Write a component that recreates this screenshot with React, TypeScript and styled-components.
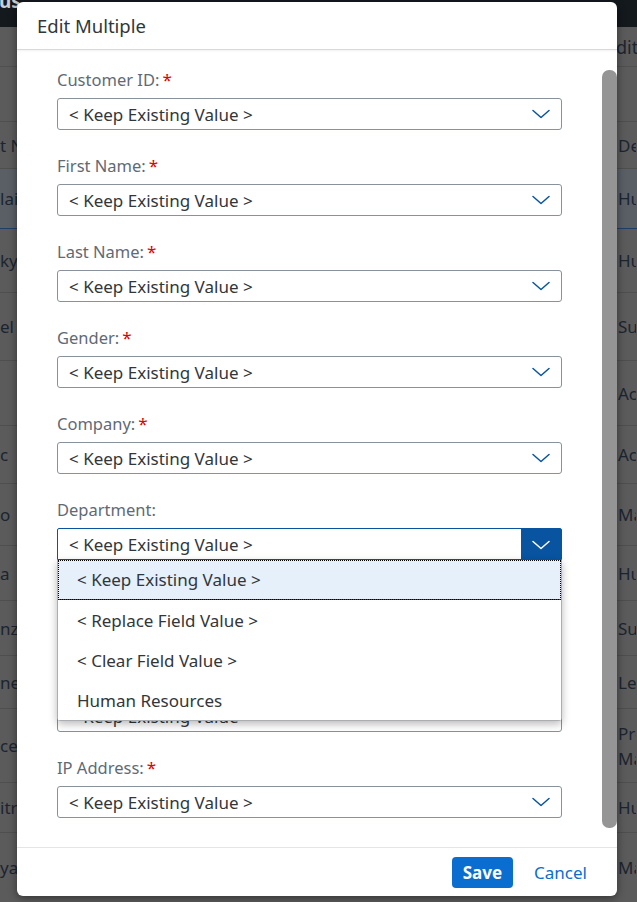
import { FC } from 'react';
import styled, { createGlobalStyle } from 'styled-components';

const GlobalStyle = createGlobalStyle`
  html, body {
    margin: 0;
    padding: 0;
    background: #5b5b5b;
  }
  * {
    box-sizing: border-box;
  }
  body {
    font-family: 'Noto Sans', 'Open Sans', Arial, sans-serif;
  }
`;

type BgRow = { left: string; right: string[]; height: number; selected?: boolean };

const bgRows: BgRow[] = [
  { left: '', right: [], height: 55 },
  { left: 't Name', right: ['Department'], height: 47 },
  { left: 'laine', right: ['Human Resources'], height: 60, selected: true },
  { left: 'ky', right: ['Human Resources'], height: 64 },
  { left: 'el', right: ['Support'], height: 68 },
  { left: '', right: ['Accounting'], height: 65 },
  { left: 'c', right: ['Accounting'], height: 58 },
  { left: 'o', right: ['Marketing'], height: 62 },
  { left: 'a', right: ['Human Resources'], height: 55 },
  { left: 'nzo', right: ['Support'], height: 55 },
  { left: 'net', right: ['Legal'], height: 53 },
  { left: 'ce', right: ['Product', 'Management'], height: 74 },
  { left: 'itry', right: ['Human Resources'], height: 50 },
  { left: 'ya', right: ['Marketing'], height: 70 },
];

const fields = [
  { label: 'Customer ID:', required: true },
  { label: 'First Name:', required: true },
  { label: 'Last Name:', required: true },
  { label: 'Gender:', required: true },
  { label: 'Company:', required: true },
  { label: 'Department:', required: false, open: true },
  { label: 'Email:', required: false },
  { label: 'Region:', required: false },
  { label: 'IP Address:', required: true },
];

const options = ['< Keep Existing Value >', '< Replace Field Value >', '< Clear Field Value >', 'Human Resources'];

const Chevron: FC<{ color: string }> = ({ color }) => (
  <svg width="18" height="10" viewBox="0 0 18 10" fill="none">
    <polyline points="1,1.5 9,8.5 17,1.5" stroke={color} strokeWidth="1.5" strokeLinecap="round" strokeLinejoin="round" />
  </svg>
);

const Select: FC<{ open?: boolean }> = ({ open }) => (
  <SelectBox $open={open}>
    <SelectValue>&lt; Keep Existing Value &gt;</SelectValue>
    <SelectButton $open={open}>
      <Chevron color={open ? '#ffffff' : '#0854a0'} />
    </SelectButton>
  </SelectBox>
);

export default function App() {
  return (
    <>
      <GlobalStyle />
      <Page>
        <ShellBar>
          <ShellTitle>us</ShellTitle>
        </ShellBar>
        <Toolbar>
          <ToolbarAction>Edit</ToolbarAction>
        </Toolbar>
        {bgRows.map((row, i) => (
          <TableRow key={i} $height={row.height} $selected={row.selected}>
            <LeftCell>{row.left}</LeftCell>
            <RightCell>
              {row.right.map((line) => (
                <CellLine key={line}>{line}</CellLine>
              ))}
            </RightCell>
          </TableRow>
        ))}

        <Dialog>
          <DialogHeader>Edit Multiple</DialogHeader>
          <DialogBody>
            <Form>
              {fields.map((f) => (
                <Field key={f.label}>
                  <Label>
                    {f.label}
                    {f.required && <Required>*</Required>}
                  </Label>
                  <Select open={f.open} />
                  {f.open && (
                    <Dropdown>
                      {options.map((o, i) => (
                        <Option key={o} $selected={i === 0}>
                          {o}
                        </Option>
                      ))}
                    </Dropdown>
                  )}
                </Field>
              ))}
            </Form>
            <ScrollTrack>
              <ScrollThumb />
            </ScrollTrack>
          </DialogBody>
          <DialogFooter>
            <PrimaryButton>Save</PrimaryButton>
            <TextButton>Cancel</TextButton>
          </DialogFooter>
        </Dialog>
      </Page>
    </>
  );
}

const Page = styled.div`
  position: relative;
  width: 637px;
  height: 902px;
  overflow: hidden;
  background: #5b5b5b;
  color: #1b2530;
  font-size: 17px;
`;

const ShellBar = styled.div`
  height: 27px;
  background: #14191e;
  overflow: hidden;
`;

const ShellTitle = styled.div`
  color: #c9ccd1;
  font-size: 19px;
  font-weight: 700;
  line-height: 14px;
  margin-top: -6px;
  margin-left: -1px;
`;

const Toolbar = styled.div`
  height: 40px;
  display: flex;
  align-items: center;
  padding-left: 606px;
  border-bottom: 1px solid #505050;
  white-space: nowrap;
`;

const ToolbarAction = styled.span`
  font-size: 18px;
  color: #1b2530;
`;

const TableRow = styled.div<{ $height: number; $selected?: boolean }>`
  height: ${(p) => p.$height}px;
  display: flex;
  align-items: center;
  justify-content: space-between;
  background: ${(p) => (p.$selected ? '#5a5f66' : '#5b5b5b')};
  border-bottom: 1px solid ${(p) => (p.$selected ? '#1c3f6a' : '#4f4f4f')};
  white-space: nowrap;
`;

const LeftCell = styled.div`
  width: 40px;
  overflow: hidden;
`;

const RightCell = styled.div`
  width: 18px;
  margin-right: 1px;
  overflow: hidden;
  display: flex;
  flex-direction: column;
`;

const CellLine = styled.div`
  line-height: 25px;
  white-space: nowrap;
`;

const Dialog = styled.div`
  position: absolute;
  left: 17px;
  top: 2px;
  width: 600px;
  height: 894px;
  background: #ffffff;
  border-radius: 6px;
  box-shadow: 0 2px 8px rgba(0, 0, 0, 0.45);
  display: flex;
  flex-direction: column;
  overflow: hidden;
`;

const DialogHeader = styled.div`
  height: 48px;
  flex: none;
  display: flex;
  align-items: center;
  padding-left: 20px;
  padding-bottom: 1px;
  font-size: 18.5px;
  color: #32363a;
  border-bottom: 1px solid #d9d9d9;
  box-shadow: 0 1px 2px rgba(0, 0, 0, 0.06);
`;

const DialogBody = styled.div`
  flex: 1;
  display: flex;
  min-height: 0;
`;

const Form = styled.div`
  flex: 1;
  display: flex;
  flex-direction: column;
  gap: 26px;
  padding: 20px 40px 0 40px;
`;

const Field = styled.div`
  position: relative;
  display: flex;
  flex-direction: column;
  gap: 8px;
`;

const Label = styled.div`
  height: 20px;
  line-height: 20px;
  font-size: 16.5px;
  color: #5f6a74;
  white-space: nowrap;
`;

const Required = styled.span`
  color: #e00000;
  margin-left: 3px;
  font-size: 17px;
`;

const SelectBox = styled.div<{ $open?: boolean }>`
  height: 32px;
  display: flex;
  align-items: center;
  border: 1px solid ${(p) => (p.$open ? '#0854a0' : '#89919a')};
  border-radius: ${(p) => (p.$open ? '2px 2px 0 0' : '3px')};
  background: #ffffff;
`;

const SelectValue = styled.div`
  flex: 1;
  padding-left: 11px;
  font-size: 17px;
  color: #32363a;
  white-space: nowrap;
`;

const SelectButton = styled.div<{ $open?: boolean }>`
  width: 40px;
  height: 100%;
  display: flex;
  align-items: center;
  justify-content: center;
  padding-top: ${(p) => (p.$open ? '1px' : '0')};
  background: ${(p) => (p.$open ? '#0854a0' : 'transparent')};
`;

const Dropdown = styled.div`
  position: absolute;
  left: 0;
  right: 0;
  top: 60px;
  z-index: 2;
  background: #ffffff;
  border: 1px solid #a9aeb3;
  border-top: none;
  border-radius: 0 0 4px 4px;
  box-shadow: 0 3px 8px rgba(0, 0, 0, 0.28);
`;

const Option = styled.div<{ $selected?: boolean }>`
  height: 40px;
  display: flex;
  align-items: center;
  padding-left: 19px;
  font-size: 17px;
  color: #32363a;
  white-space: nowrap;
  background: ${(p) => (p.$selected ? '#e5f0fa' : '#ffffff')};
  border-bottom: ${(p) => (p.$selected ? '1px solid #0854a0' : 'none')};
  outline: ${(p) => (p.$selected ? '1px dotted #000000' : 'none')};
  outline-offset: -1px;
`;

const ScrollTrack = styled.div`
  width: 15px;
  flex: none;
  display: flex;
  padding: 20px 0 19px;
`;

const ScrollThumb = styled.div`
  flex: 1;
  background: #959595;
  border-radius: 7px;
`;

const DialogFooter = styled.div`
  height: 49px;
  flex: none;
  display: flex;
  align-items: center;
  justify-content: flex-end;
  gap: 11px;
  padding-right: 20px;
  border-top: 1px solid #e5e5e5;
`;

const PrimaryButton = styled.button`
  height: 31px;
  padding: 0 11px;
  border: none;
  border-radius: 4px;
  background: #0a6ed1;
  color: #ffffff;
  font-family: inherit;
  font-size: 17px;
  font-weight: 700;
`;

const TextButton = styled.button`
  height: 31px;
  padding: 0 10px;
  border: none;
  background: transparent;
  color: #0a6ed1;
  font-family: inherit;
  font-size: 17px;
`;
